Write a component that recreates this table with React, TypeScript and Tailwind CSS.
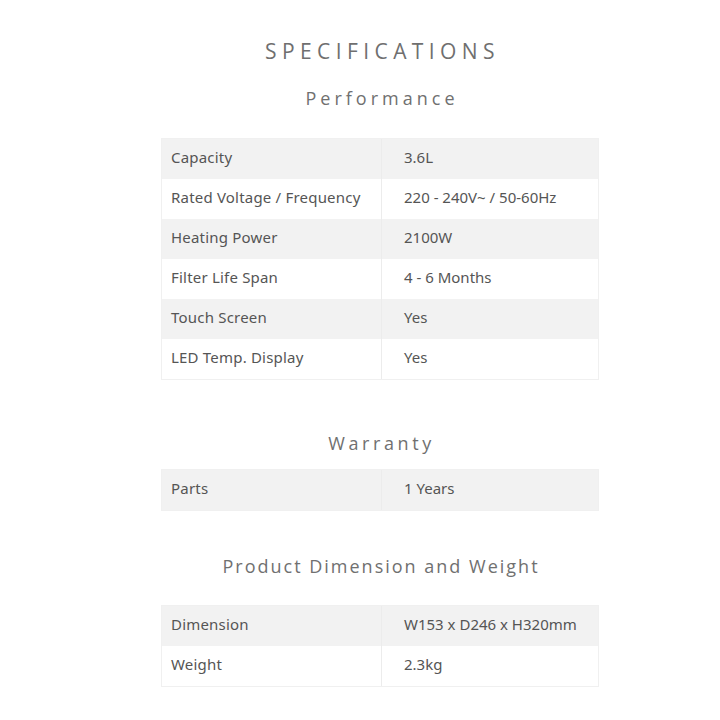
import React from "react";

type Row = [string, string];

const performance: Row[] = [
  ["Capacity", "3.6L"],
  ["Rated Voltage / Frequency", "220 - 240V~ / 50-60Hz"],
  ["Heating Power", "2100W"],
  ["Filter Life Span", "4 - 6 Months"],
  ["Touch Screen", "Yes"],
  ["LED Temp. Display", "Yes"],
];

const warranty: Row[] = [["Parts", "1 Years"]];

const dimension: Row[] = [
  ["Dimension", "W153 x D246 x H320mm"],
  ["Weight", "2.3kg"],
];

function SpecTable({ rows }: { rows: Row[] }) {
  return (
    <div className="border border-[#f0f0f0]">
      {rows.map(([label, value], i) => (
        <div
          key={label}
          className={`flex h-10 items-center text-[15px] text-[#555] ${
            i % 2 === 0 ? "bg-[#f2f2f2]" : "bg-white"
          }`}
        >
          <div className="flex h-full w-[220px] items-center border-r border-[#ececec] pb-[3px] pl-[9px] tracking-[0.2px]">
            {label}
          </div>
          <div className="pb-[3px] pl-[22px]">{value}</div>
        </div>
      ))}
    </div>
  );
}

export default function App() {
  return (
    <div className="min-h-[720px] bg-white font-['Noto_Sans','Lato',sans-serif]">
      <div className="ml-[161px] w-[438px]">
        <h1 className="pl-[5px] pt-[36px] text-center font-['Open_Sans',sans-serif] text-[21px] leading-[30px] tracking-[5.4px] text-[#6f6f6f]">
          SPECIFICATIONS
        </h1>
        <h2 className="mt-[20px] pl-[4px] text-center font-['Open_Sans',sans-serif] text-[18px] leading-[24px] tracking-[4px] text-[#707070]">
          Performance
        </h2>
        <div className="mt-[28px]">
          <SpecTable rows={performance} />
        </div>
        <h2 className="mt-[51px] pl-[3px] text-center font-['Open_Sans',sans-serif] text-[18px] leading-[24px] tracking-[3.6px] text-[#707070]">
          Warranty
        </h2>
        <div className="mt-[14px]">
          <SpecTable rows={warranty} />
        </div>
        <h2 className="mt-[43px] pl-[2px] text-center font-['Open_Sans',sans-serif] text-[18px] leading-[24px] tracking-[2px] text-[#707070]">
          Product Dimension and Weight
        </h2>
        <div className="mt-[27px]">
          <SpecTable rows={dimension} />
        </div>
      </div>
    </div>
  );
}
